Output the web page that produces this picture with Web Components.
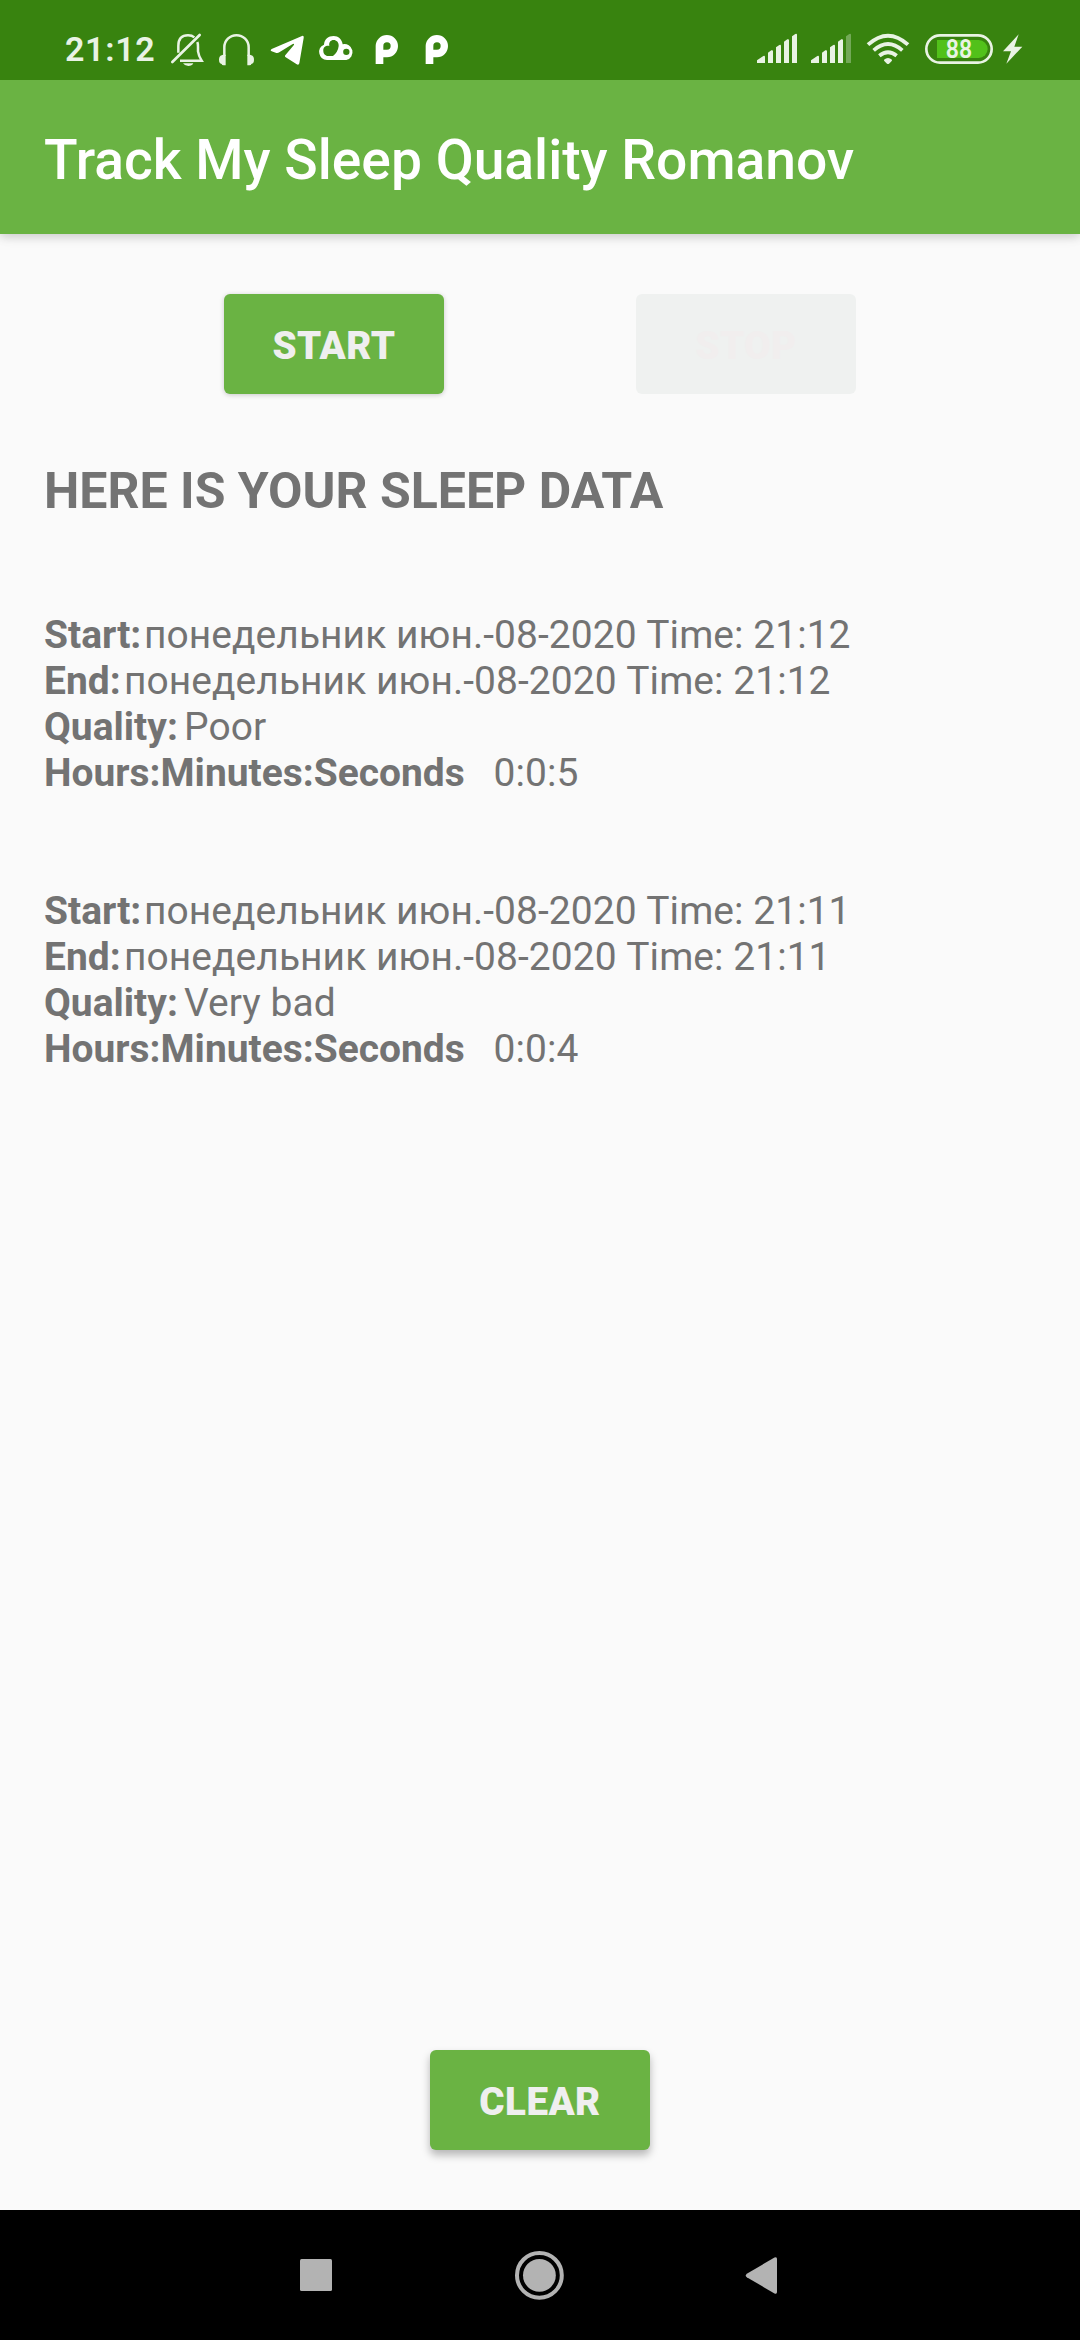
<!DOCTYPE html>
<html lang="en">
<head>
<meta charset="utf-8">
<title>Track My Sleep Quality</title>
<style>
  html, body { margin: 0; padding: 0; background: #fafafa; }
  body { font-family: Roboto, "Noto Sans", sans-serif; }
</style>
</head>
<body>
<sleep-app></sleep-app>
<script>
const define = (name, html) => {
  const tpl = document.createElement('template');
  tpl.innerHTML = html;
  customElements.define(name, class extends HTMLElement {
    constructor() {
      super();
      this.attachShadow({ mode: 'open' }).append(tpl.content.cloneNode(true));
    }
  });
};

define('status-bar', `
<style>
  :host { display: flex; height: 80px; background: #38830f; color: #e9f3e4; fill: #e9f3e4; }
  svg { display: block; height: 80px; flex: none; }
  .time { width: 105px; padding-left: 65px; padding-top: 9px; height: 71px; flex: none;
    font-size: 34px; line-height: 80px; font-weight: 600; letter-spacing: .7px; white-space: nowrap; }
  .right { display: flex; margin-left: auto; padding-right: 57px; }
</style>
<div class="time">21:12</div>
<svg width="34" viewBox="390 -30 102 240" fill="none" stroke="#e9f3e4" stroke-width="7.500">
  <path d="M415 128V108C415 86 426 76 444 76Q456 76 463 82M472 96Q474 101 474 110V124Q476 138 485 152H420"/>
  <path d="M397 156L479 75" stroke-width="8" stroke-linecap="round"/>
  <path d="M429 160H460Q456 168 445 168Q434 168 429 160Z" fill="#e9f3e4" stroke="none"/>
</svg>
<svg width="37" style="margin-left:14px" viewBox="534 -30 111 240">
  <path d="M553 138V112A36.5 36.5 0 0 1 626 112V138" fill="none" stroke="#e9f3e4" stroke-width="7.500"/>
  <path d="M550 134H557V166H551Q545 166 545 162Q537 160 537 149Q537 138 545 136Q546 134 550 134ZM629 134H622V166H628Q634 166 634 162Q642 160 642 149Q642 138 634 136Q633 134 629 134Z"/>
</svg>
<svg width="34" style="margin-left:15px" viewBox="30 -30 102 240" fill="#fff">
  <path d="M35 117L126 78Q132 76 131 84L118 160Q116 167 109 162L76 141Q73 138 77 134L101 106Q105 99 97 103L58 127Q53 130 47 128L35 124Q29 121 35 117Z"/>
</svg>
<svg width="38" style="margin-left:14px" viewBox="174 -30 114 240" fill="#fff" fill-rule="evenodd">
  <path d="M201 150A24 24 0 0 1 192 104C193 88 205 78 221 78C235 78 246 88 248 103A24 24 0 1 1 259 150ZM204 138H219Q234 126 236 108C237 97 229 90 221 90C212 90 206 97 208 108C198 106 189 112 190 123C190 131 196 138 204 138ZM259 116A9.500 9.500 0 1 0 259 135A9.500 9.500 0 1 0 259 116Z"/>
</svg>
<svg width="25" style="margin-left:18px" viewBox="342 -30 75 240" fill="#fff" fill-rule="evenodd">
  <path d="M347 162V108A33.500 33.500 0 1 1 381 142H370V162ZM370 119H381A11 11 0 1 0 370 108Z"/>
</svg>
<svg width="25" style="margin-left:25px" viewBox="342 -30 75 240" fill="#fff" fill-rule="evenodd">
  <path d="M347 162V108A33.500 33.500 0 1 1 381 142H370V162ZM370 119H381A11 11 0 1 0 370 108Z"/>
</svg>
<div class="right">
  <svg width="42" viewBox="48 -30 126 240">
    <path d="M51 159V151L70 138Q75 136 75 141V159ZM84 159V128L94 121Q99 119 99 124V159ZM108 159V112L118 105Q123 103 123 108V159ZM132 159V95L142 88Q147 86 147 91V159Z"/>
    <path d="M156 159V79L166 72Q171 70 171 75V159Z"/>
  </svg>
  <svg width="42" style="margin-left:12px" viewBox="48 -30 126 240">
    <path d="M51 159V151L70 138Q75 136 75 141V159ZM84 159V128L94 121Q99 119 99 124V159ZM108 159V112L118 105Q123 103 123 108V159ZM132 159V95L142 88Q147 86 147 91V159Z"/>
    <path d="M156 159V79L166 72Q171 70 171 75V159Z" opacity=".34"/>
  </svg>
  <svg width="44" style="margin-left:14px" viewBox="378 -30 132 240" fill="none" stroke="#e9f3e4" stroke-width="11.500">
    <path d="M384 104Q444 50 504 104M401 121Q444 83 487 121M418 137Q444 116 470 137"/>
    <path d="M432 149Q444 139 456 149Q457 152 453 155L447 161Q444 163 441 161L435 155Q431 152 432 149Z" fill="#e9f3e4" stroke="none"/>
  </svg>
  <svg width="70" style="margin-left:14px" viewBox="552 -30 210 240">
    <rect x="559" y="76" width="196" height="82" rx="41" fill="none" stroke="#e9f3e4" stroke-width="8"/>
    <path d="M591 90H716A27 27 0 0 1 716 144H591Z" fill="#52c11a"/>
    <text x="657" y="143" text-anchor="middle" font-size="75" font-weight="600" textLength="79" lengthAdjust="spacingAndGlyphs">88</text>
  </svg>
  <svg width="21" style="margin-left:8px" viewBox="786 -30 63 240">
    <path d="M836 73L789 124H813L799 161L847 110H823Z"/>
  </svg>
</div>`);

define('app-bar', `
<style>
  :host { display: flex; align-items: center; height: 154px; padding: 0 44px; box-sizing: border-box;
    background: #6ab343; color: #fff; position: relative;
    box-shadow: 0 3px 9px rgba(0,0,0,.14), 0 0 16px rgba(0,0,0,.08); clip-path: inset(0 0 -40px 0);
    font-size: 55.200px; font-weight: 500; white-space: nowrap; }
  span { padding-top: 5px; }
</style><span><slot></slot></span>`);

define('sleep-button', `
<style>
  :host { display: flex; align-items: center; justify-content: center; width: 220px; height: 100px; flex: none;
    border-radius: 6px; background: #6ab343; color: #efefef; font-size: 38.5px; font-weight: 900; letter-spacing: .45px;
    box-shadow: 0 1px 5px rgba(0,0,0,.2); }
  :host([disabled]) { background: #eff1f0; color: #f1eeee; box-shadow: none; }
  :host([raised]) { box-shadow: 0 5px 8px rgba(0,0,0,.28); }
  span { padding-top: 3px; }
</style><span><slot></slot></span>`);

define('sleep-field', `
<style>
  :host { display: flex; height: 46px; line-height: 46px; white-space: pre; }
  b { width: var(--label, 100px); flex: none; font-weight: 700; }
  .value { letter-spacing: .065px; }
</style><b><slot name="label"></slot></b><span class="value"><slot></slot></span>`);

define('sleep-night', `
<style>
  :host { display: flex; flex-direction: column; color: #737373; font-size: 38.950px; }
</style><slot></slot>`);

define('nav-bar', `
<style>
  :host { display: flex; height: 130px; background: #000; fill: #b3b3b3; }
  svg { display: block; height: 130px; flex: none; }
</style>
<svg width="32" style="margin-left:300px" viewBox="0 0 32 130"><rect y="49" width="32" height="32" rx="1.5"/></svg>
<svg width="50" style="margin-left:182px" viewBox="0 0 50 130"><circle cx="25.4" cy="65.3" r="16.4"/><circle cx="25.4" cy="65.3" r="22.4" fill="none" stroke="#b3b3b3" stroke-width="4"/></svg>
<svg width="32" style="margin-left:181px" viewBox="0 0 32 130"><path d="M1.8 63.7L29.5 47.6Q32 46.5 32 49V82Q32 84.500 29.500 83.400L1.800 67.300Q-.3 65.500 1.800 63.700Z"/></svg>`);

define('sleep-app', `
<style>
  :host { display: flex; flex-direction: column; width: 1080px; height: 2340px; background: #fafafa; overflow: hidden; }
  main { flex: 1; display: flex; flex-direction: column; padding: 60px 44px; min-height: 0; box-sizing: border-box; }
  .actions { display: flex; gap: 192px; padding-left: 180px; }
  h1 { margin: 67px 0 0; font-size: 50px; line-height: 60px; font-weight: 700; color: #737373; white-space: nowrap; }
  .nights { display: flex; flex-direction: column; gap: 92px; margin-top: 91px; flex: 1; }
  .clear { align-self: center; }
</style>
<status-bar></status-bar>
<app-bar>Track My Sleep Quality Romanov</app-bar>
<main>
  <div class="actions"><sleep-button>START</sleep-button><sleep-button disabled>STOP</sleep-button></div>
  <h1>HERE IS YOUR SLEEP DATA</h1>
  <div class="nights">
    <sleep-night>
      <sleep-field style="--label:100px"><span slot="label">Start:</span>понедельник июн.-08-2020 Time: 21:12</sleep-field>
      <sleep-field style="--label:80px"><span slot="label">End:</span>понедельник июн.-08-2020 Time: 21:12</sleep-field>
      <sleep-field style="--label:140px"><span slot="label">Quality:</span>Poor</sleep-field>
      <sleep-field style="--label:449.500px"><span slot="label">Hours:Minutes:Seconds</span>0:0:5</sleep-field>
    </sleep-night>
    <sleep-night>
      <sleep-field style="--label:100px"><span slot="label">Start:</span>понедельник июн.-08-2020 Time: 21:11</sleep-field>
      <sleep-field style="--label:80px"><span slot="label">End:</span>понедельник июн.-08-2020 Time: 21:11</sleep-field>
      <sleep-field style="--label:140px"><span slot="label">Quality:</span>Very bad</sleep-field>
      <sleep-field style="--label:449.500px"><span slot="label">Hours:Minutes:Seconds</span>0:0:4</sleep-field>
    </sleep-night>
  </div>
  <sleep-button class="clear" raised>CLEAR</sleep-button>
</main>
<nav-bar></nav-bar>`);
</script>
</body>
</html>
